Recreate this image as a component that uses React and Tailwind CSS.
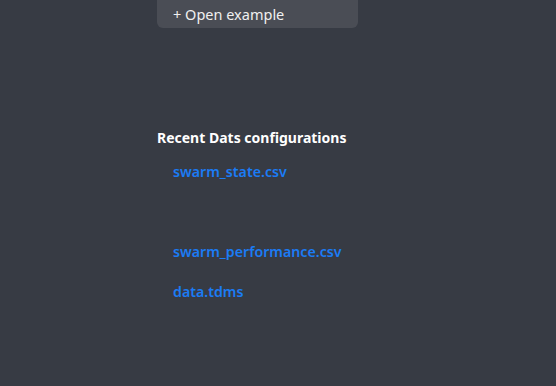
export default function App() {
  const recent = ["swarm_state.csv", "", "swarm_performance.csv", "data.tdms"];

  return (
    <div
      className="h-[386px] w-[556px] overflow-hidden bg-[#373b44] text-white"
      style={{ fontFamily: '"Noto Sans", "Open Sans", sans-serif' }}
    >
      <div className="ml-[157px] w-[201px]">
        <button className="-mt-2 block h-9 w-full rounded-md bg-[#4a4d55] pl-4 pt-[11px] pb-1 text-left text-[14.5px] leading-5 text-[#f0f0f0]">
          + Open example
        </button>

        <h2 className="mt-[100px] text-[14px] font-bold leading-5 whitespace-nowrap">
          Recent Dats configurations
        </h2>

        <ul className="mt-[4px] pl-4">
          {recent.map((name, i) => (
            <li key={i} className="h-10 flex items-center">
              <a className="text-[14.2px] font-semibold text-[#1b7cf5] whitespace-nowrap">
                {name}
              </a>
            </li>
          ))}
        </ul>
      </div>
    </div>
  );
}
